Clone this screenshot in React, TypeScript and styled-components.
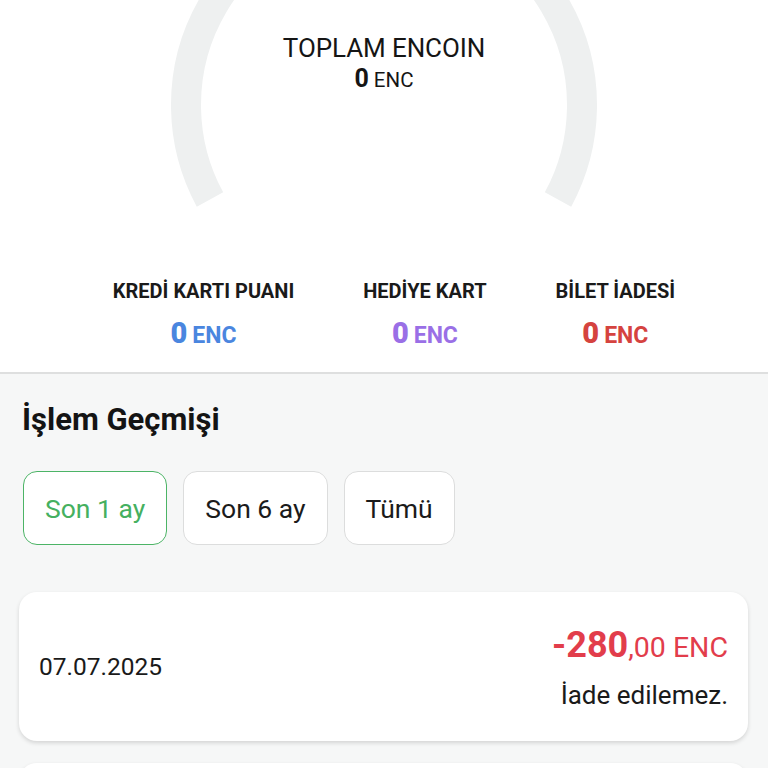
import React from "react";
import styled, { createGlobalStyle } from "styled-components";

const Global = createGlobalStyle`
  html, body { margin: 0; padding: 0; background: #f6f7f7; }
  body { font-family: Roboto, "Noto Sans", "Liberation Sans", sans-serif; color: #151515; }
  * { box-sizing: border-box; }
`;

const Page = styled.div`
  width: 768px;
  height: 768px;
  overflow: hidden;
  background: #f6f7f7;
`;

const Top = styled.section`
  background: #ffffff;
  border-bottom: 2px solid #dedfdf;
  height: 374px;
`;

const Gauge = styled.div`
  position: relative;
  height: 278px;
`;

const Ring = styled.svg`
  position: absolute;
  left: 0;
  top: 0;
`;

const GaugeText = styled.div`
  position: relative;
  display: flex;
  flex-direction: column;
  align-items: center;
  padding-top: 33px;
`;

const GaugeTitle = styled.div`
  font-size: 26px;
  line-height: 30px;
  letter-spacing: -0.1px;
`;

const GaugeValue = styled.div`
  margin-top: 2px;
  font-size: 20.5px;
  line-height: 28px;
  b { font-size: 25px; font-weight: 700; margin-right: 5px; }
`;

const Stats = styled.div`
  display: flex;
  justify-content: center;
  gap: 69px;
  padding-left: 20px;
`;

const Stat = styled.div`
  display: flex;
  flex-direction: column;
  align-items: center;
`;

const StatLabel = styled.div`
  font-size: 20px;
  font-weight: 700;
  line-height: 26px;
  color: #1a1a1a;
`;

const StatValue = styled.div<{ $color: string }>`
  margin-top: 13px;
  color: ${(p) => p.$color};
  font-weight: 700;
  font-size: 23px;
  line-height: 32px;
  b { font-size: 29px; margin-right: 5px; }
`;

const History = styled.section`
  padding: 28px 20px 0 19px;
`;

const Title = styled.h2`
  margin: 0 0 0 3px;
  font-size: 31px;
  line-height: 36px;
  font-weight: 700;
  color: #141414;
`;

const Filters = styled.div`
  display: flex;
  gap: 16px;
  margin: 33px 0 0 4px;
`;

const Filter = styled.button<{ $active?: boolean }>`
  height: 74px;
  padding: 0 21px;
  border-radius: 14px;
  background: #ffffff;
  border: 1.5px solid ${(p) => (p.$active ? "#4cb466" : "#dcdddd")};
  color: ${(p) => (p.$active ? "#45b060" : "#1b1b1b")};
  font-family: inherit;
  font-size: 26.5px;
`;

const List = styled.div`
  display: flex;
  flex-direction: column;
  gap: 22px;
  margin-top: 47px;
`;

const Card = styled.div`
  height: 149px;
  background: #ffffff;
  border-radius: 18px;
  box-shadow: 0 2px 4px rgba(0, 0, 0, 0.14);
  display: flex;
  align-items: center;
  justify-content: space-between;
  padding: 0 20px 0 20px;
`;

const DateText = styled.div`
  font-size: 24.5px;
  color: #1a1a1a;
`;

const Right = styled.div`
  display: flex;
  flex-direction: column;
  align-items: flex-end;
  gap: 11px;
`;

const Amount = styled.div`
  color: #e23d4b;
  font-size: 28.5px;
  line-height: 42px;
  b { font-size: 36px; font-weight: 700; }
`;

const Note = styled.div`
  font-size: 26px;
  line-height: 30px;
  color: #1a1a1a;
`;

const cx = 384;
const cy = 105;
const r = 198;
const a = (28.5 * Math.PI) / 180;
const lx = cx - r * Math.cos(a);
const rx = cx + r * Math.cos(a);
const ey = cy + r * Math.sin(a);

export default function App() {
  return (
    <Page>
      <Global />
      <Top>
        <Gauge>
          <Ring width={768} height={278} viewBox="0 0 768 278">
            <path
              d={`M ${lx} ${ey} A ${r} ${r} 0 1 1 ${rx} ${ey}`}
              fill="none"
              stroke="#eef0f0"
              strokeWidth={30}
            />
          </Ring>
          <GaugeText>
            <GaugeTitle>TOPLAM ENCOIN</GaugeTitle>
            <GaugeValue>
              <b>0</b>ENC
            </GaugeValue>
          </GaugeText>
        </Gauge>
        <Stats>
          <Stat>
            <StatLabel>KREDİ KARTI PUANI</StatLabel>
            <StatValue $color="#4a86df">
              <b>0</b>ENC
            </StatValue>
          </Stat>
          <Stat>
            <StatLabel>HEDİYE KART</StatLabel>
            <StatValue $color="#9a6fe6">
              <b>0</b>ENC
            </StatValue>
          </Stat>
          <Stat>
            <StatLabel>BİLET İADESİ</StatLabel>
            <StatValue $color="#d5433f">
              <b>0</b>ENC
            </StatValue>
          </Stat>
        </Stats>
      </Top>
      <History>
        <Title>İşlem Geçmişi</Title>
        <Filters>
          <Filter $active>Son 1 ay</Filter>
          <Filter>Son 6 ay</Filter>
          <Filter>Tümü</Filter>
        </Filters>
        <List>
          <Card>
            <DateText>07.07.2025</DateText>
            <Right>
              <Amount>
                <b>-280</b>,00 ENC
              </Amount>
              <Note>İade edilemez.</Note>
            </Right>
          </Card>
          <Card />
        </List>
      </History>
    </Page>
  );
}
